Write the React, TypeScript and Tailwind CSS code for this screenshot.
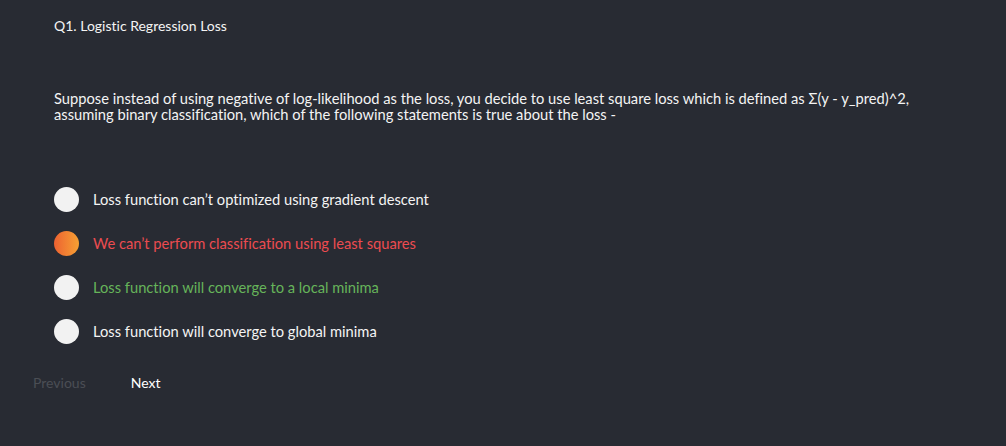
import React from "react";

const options = [
  { text: "Loss function can\u2019t optimized using gradient descent", color: "text-[#f4f4f4]", circle: "bg-[#f2f2f2]" },
  { text: "We can\u2019t perform classification using least squares", color: "text-[#ec4b50]", circle: "bg-gradient-to-r from-[#ec6131] to-[#f6a033]" },
  { text: "Loss function will converge to a local minima", color: "text-[#66b45a]", circle: "bg-[#f2f2f2]" },
  { text: "Loss function will converge to global minima", color: "text-[#f4f4f4]", circle: "bg-[#f2f2f2]" },
];

export default function App() {
  return (
    <div
      className="w-[1006px] h-[446px] bg-[#282b33] text-[#f4f4f4] text-[14px] overflow-hidden [font-variant-ligatures:none]"
      style={{ fontFamily: "Lato, 'Noto Sans', sans-serif" }}
    >
      <div className="pl-[54px] pt-[17px]">
        <div className="leading-[18px]">Q1. Logistic Regression Loss</div>
        <div className="mt-[55px] leading-[16px] w-[940px] text-[14.7px]">
          Suppose instead of using negative of log-likelihood as the loss, you decide to use least square loss which is defined as Σ(y - y_pred)^2,
          <br />
          assuming binary classification, which of the following statements is true about the loss -
        </div>
        <div className="mt-[65px] flex flex-col gap-[19px] text-[14.7px]">
          {options.map((o) => (
            <div key={o.text} className="flex items-center h-[25px]">
              <div className={`w-[25px] h-[25px] rounded-full ${o.circle}`} />
              <div className={`ml-[14px] ${o.color}`}>{o.text}</div>
            </div>
          ))}
        </div>
      </div>
      <div className="flex items-center pl-[33px] mt-[28px]">
        <span className="text-[#4b4e55]">Previous</span>
        <span className="ml-[45px] text-white">Next</span>
      </div>
    </div>
  );
}
